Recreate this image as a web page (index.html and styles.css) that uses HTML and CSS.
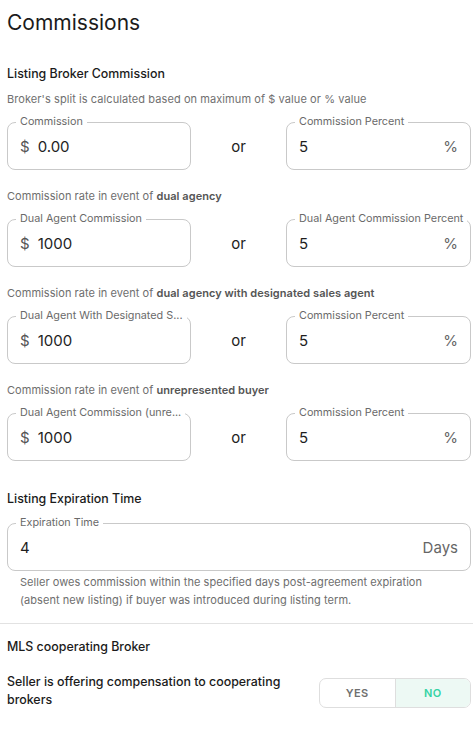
FILE: index.html
```html
<!DOCTYPE html>
<html>
<head>
<meta charset="utf-8">
<link rel="stylesheet" href="styles.css">
</head>
<body>
<div class="page">
  <h1 class="title">Commissions</h1>

  <h2 class="section-title first">Listing Broker Commission</h2>
  <p class="desc">Broker's split is calculated based on maximum of $ value or % value</p>
  <div class="pair">
    <div class="field"><span class="label">Commission</span><span class="prefix">$</span><span class="value">0.00</span></div>
    <div class="or">or</div>
    <div class="field"><span class="label">Commission Percent</span><span class="value">5</span><span class="suffix">%</span></div>
  </div>

  <p class="caption">Commission rate in event of <b>dual agency</b></p>
  <div class="pair">
    <div class="field"><span class="label">Dual Agent Commission</span><span class="prefix">$</span><span class="value">1000</span></div>
    <div class="or">or</div>
    <div class="field"><span class="label">Dual Agent Commission Percent</span><span class="value">5</span><span class="suffix">%</span></div>
  </div>

  <p class="caption">Commission rate in event of <b>dual agency with designated sales agent</b></p>
  <div class="pair">
    <div class="field"><span class="label">Dual Agent With Designated S...</span><span class="prefix">$</span><span class="value">1000</span></div>
    <div class="or">or</div>
    <div class="field"><span class="label">Commission Percent</span><span class="value">5</span><span class="suffix">%</span></div>
  </div>

  <p class="caption">Commission rate in event of <b>unrepresented buyer</b></p>
  <div class="pair">
    <div class="field"><span class="label">Dual Agent Commission (unre...</span><span class="prefix">$</span><span class="value">1000</span></div>
    <div class="or">or</div>
    <div class="field"><span class="label">Commission Percent</span><span class="value">5</span><span class="suffix">%</span></div>
  </div>

  <h2 class="section-title expiration">Listing Expiration Time</h2>
  <div class="field wide"><span class="label">Expiration Time</span><span class="value">4</span><span class="suffix days">Days</span></div>
  <p class="helper">Seller owes commission within the specified days post-agreement expiration (absent new listing) if buyer was introduced during listing term.</p>

  <div class="divider"></div>

  <h2 class="section-title mls">MLS cooperating Broker</h2>
  <div class="offer-row">
    <div class="offer-text">Seller is offering compensation to cooperating brokers</div>
    <div class="toggle">
      <span class="opt">YES</span>
      <span class="opt active">NO</span>
    </div>
  </div>
</div>
</body>
</html>
```

FILE: styles.css
```css
* { box-sizing: border-box; }
html, body { margin: 0; padding: 0; background: #fff; }
body {
  font-family: Inter, "Noto Sans", "Liberation Sans", sans-serif;
  color: #1f1f1f;
  width: 473px;
  overflow: hidden;
}
.page { padding: 0 2px 20px 7px; }
.title {
  margin: 9px 0 0;
  font-size: 21px;
  line-height: 28px;
  font-weight: 400;
  color: #1b1b1b;
}
.section-title {
  margin: 0;
  font-size: 12.4px;
  line-height: 18px;
  font-weight: 500;
  color: #1b1b1b;
}
.section-title.first { margin-top: 28px; }
.desc {
  margin: 8px 0 15px;
  font-size: 11px;
  line-height: 16px;
  letter-spacing: 0.08px;
  color: #707070;
}
.caption {
  margin: 18px 0 15px;
  font-size: 11px;
  line-height: 16px;
  letter-spacing: 0.05px;
  color: #6e6e6e;
}
.caption b { font-weight: 600; color: #555; }
.pair {
  display: grid;
  grid-template-columns: 184px 95px 185px;
}
.or {
  display: flex;
  align-items: center;
  justify-content: center;
  font-size: 15px;
  color: #222;
}
.field {
  position: relative;
  height: 48px;
  border: 1px solid #c9c9c9;
  border-radius: 8px;
  display: flex;
  align-items: center;
  padding: 0 12px;
  font-size: 15px;
}
.label {
  position: absolute;
  top: -8px;
  left: 8px;
  padding: 0 4px;
  background: #fff;
  font-size: 10.8px;
  line-height: 14px;
  color: #6a6a6a;
  white-space: nowrap;
}
.prefix { color: #555; margin-right: 8px; }
.value { color: #1e1e1e; flex: 1; }
.suffix { color: #666; }
.days { font-size: 15px; }
.section-title.expiration { margin-top: 29px; margin-bottom: 15px; }
.helper {
  margin: 2px 0 0;
  padding: 0 30px 0 13px;
  font-size: 11px;
  line-height: 18px;
  letter-spacing: 0.05px;
  color: #6e6e6e;
}
.divider {
  height: 1px;
  background: #e2e2e2;
  margin: 14px -2px 0 -7px;
}
.section-title.mls { margin-top: 14px; }
.offer-row {
  margin-top: 17px;
  display: flex;
  align-items: center;
  justify-content: space-between;
}
.offer-text {
  width: 290px;
  font-size: 12.4px;
  line-height: 18px;
  font-weight: 500;
  color: #1b1b1b;
}
.toggle {
  display: flex;
  width: 152px;
  height: 30px;
  border: 1px solid #dedede;
  border-radius: 7px;
  overflow: hidden;
  margin-top: 4px;
}
.opt {
  flex: 1;
  display: flex;
  align-items: center;
  justify-content: center;
  font-size: 11px;
  font-weight: 600;
  letter-spacing: 0.4px;
  color: #707070;
}
.opt.active {
  background: #edf9f4;
  color: #35d3a4;
  border-left: 1px solid #dedede;
}
```
